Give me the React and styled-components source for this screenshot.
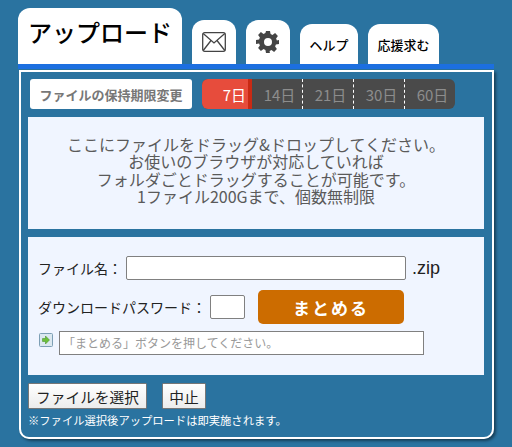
import React from "react";
import styled, { createGlobalStyle } from "styled-components";

const GlobalStyle = createGlobalStyle`
  html, body {
    margin: 0;
    padding: 0;
    background: #2a73a0;
  }
  body {
    font-family: "Noto Sans CJK JP", "Liberation Sans", sans-serif;
    color: #222;
  }
`;

const Page = styled.div`
  width: 512px;
  height: 447px;
  box-sizing: border-box;
  padding: 8px 0 0 18px;
  overflow: hidden;
`;

const Tabs = styled.div`
  display: flex;
  align-items: flex-end;
  gap: 10px;
  height: 56px;
`;

const Tab = styled.div`
  display: flex;
  align-items: center;
  justify-content: center;
  box-sizing: border-box;
  width: ${(p) => p.$w}px;
  height: ${(p) => p.$h}px;
  background: #fff;
  border-radius: 12px 12px 0 0;
  color: #000;
  font-size: ${(p) => p.$size || 13}px;
  font-weight: ${(p) => p.$weight || 500};
  padding-bottom: ${(p) => p.$pb || 0}px;
`;

const BlueLine = styled.div`
  width: 476px;
  height: 5px;
  background: #1c6fe0;
`;

const Panel = styled.div`
  box-sizing: border-box;
  width: 475px;
  height: 369px;
  margin: 1px 0 0 1px;
  border: 2px solid #fff;
  border-radius: 0 0 10px 10px;
  box-shadow: 2px 2px 3px rgba(0, 0, 0, 0.45);
  padding: 7px 8px 0 7px;
`;

const OptionBar = styled.div`
  display: flex;
  align-items: center;
  height: 30px;
  padding-left: 2px;
`;

const PeriodLabel = styled.div`
  width: 162px;
  height: 30px;
  display: flex;
  align-items: center;
  justify-content: center;
  background: #fff;
  border-radius: 3px;
  color: #777;
  font-size: 13px;
  font-weight: 700;
`;

const Periods = styled.div`
  display: flex;
  height: 30px;
  margin-left: 10px;
  border-radius: 6px;
  overflow: hidden;
  background: #4a4a4a;
`;

const Period = styled.div`
  box-sizing: border-box;
  width: ${(p) => p.$w}px;
  display: flex;
  align-items: center;
  justify-content: ${(p) => (p.$active ? "flex-end" : "center")};
  padding-left: ${(p) => (p.$active ? 0 : 5)}px;
  padding-right: ${(p) => (p.$active ? 2 : 0)}px;
  font-size: 15px;
  color: ${(p) => (p.$active ? "#fff" : "#8d8d8d")};
  background: ${(p) => (p.$active ? "#e74c3c" : "transparent")};
  border-right: ${(p) =>
    p.$active ? "4px solid #c92a14" : p.$last ? "none" : "1px dashed #fff"};
`;

const InfoBox = styled.div`
  box-sizing: border-box;
  height: 112px;
  margin-top: 8px;
  padding-top: 19px;
  background: #f0f5ff;
  color: #5a5a5a;
  font-size: 16px;
  line-height: 17.4px;
  text-align: center;
`;

const FormBox = styled.div`
  box-sizing: border-box;
  height: 138px;
  margin-top: 8px;
  padding: 19px 0 0 10px;
  background: #f0f5ff;
`;

const Row = styled.div`
  display: flex;
  align-items: center;
  height: ${(p) => p.$h}px;
  margin-top: ${(p) => p.$mt || 0}px;
`;

const Label = styled.span`
  font-size: 14px;
  color: #222;
  white-space: nowrap;
`;

const TextInput = styled.div`
  box-sizing: border-box;
  width: ${(p) => p.$w}px;
  height: 24px;
  margin-left: ${(p) => p.$ml}px;
  background: #fff;
  border: 1px solid #808080;
  border-radius: ${(p) => (p.$square ? 0 : 2)}px;
  color: #999;
  font-size: 12px;
  line-height: 22px;
  padding-left: 3px;
  white-space: nowrap;
`;

const Ext = styled.span`
  margin-left: 6px;
  font-size: 18px;
  color: #222;
  font-family: "Liberation Sans", sans-serif;
`;

const SubmitButton = styled.div`
  width: 146px;
  height: 34px;
  margin-left: 13px;
  display: flex;
  align-items: center;
  justify-content: center;
  background: #cc6c00;
  border-radius: 5px;
  color: #fff;
  font-size: 17px;
  font-weight: 700;
  letter-spacing: 2px;
`;

const StatusIcon = styled.span`
  display: flex;
  align-self: flex-start;
  margin: 2px 0 0 1px;
`;

const Actions = styled.div`
  display: flex;
  gap: 15px;
  margin-top: 8px;
`;

const Button = styled.div`
  box-sizing: border-box;
  width: ${(p) => p.$w}px;
  height: 26px;
  display: flex;
  align-items: center;
  justify-content: center;
  background: linear-gradient(#fff, #ececec);
  border: 1px solid #777;
  border-radius: 1px;
  color: #222;
  font-size: 14.7px;
`;

const Note = styled.div`
  margin-top: 3px;
  color: #fff;
  font-size: 11.3px;
  line-height: 16px;
  white-space: nowrap;
`;

const MailIcon = () => (
  <svg width="24" height="20" viewBox="0 0 24 20" fill="none" stroke="#444" strokeWidth="1.3">
    <rect x="0.7" y="0.7" width="22.6" height="18.6" rx="2" />
    <path d="M1.2 1.5 L12 11 L22.8 1.5 M1.2 18.5 L9 8.5 M22.8 18.5 L15 8.5" />
  </svg>
);

const GearIcon = () => (
  <svg width="24" height="24" viewBox="0 0 24 24">
    <path
      fill="#444"
      fillRule="evenodd"
      d="M10 1h4l.6 3.1 1.9.8 2.6-1.8 2.8 2.8-1.8 2.6.8 1.9L23 10v4l-3.1.6-.8 1.9 1.8 2.6-2.8 2.8-2.6-1.8-1.9.8L13.9 23H10l-.6-3.1-1.9-.8-2.6 1.8-2.8-2.8 1.8-2.6-.8-1.9L0 14v-4l3.1-.6.8-1.9L2.1 4.9l2.8-2.8 2.6 1.8 1.9-.8zM12 8a4 4 0 1 0 0 8 4 4 0 0 0 0-8z"
    />
  </svg>
);

const ArrowIcon = () => (
  <svg width="14" height="14" viewBox="0 0 14 14">
    <rect x="0.5" y="0.5" width="13" height="13" rx="1" fill="#dbe8f0" stroke="#7d9fb5" />
    <path d="M3.5 5.5h3V3l4 4-4 4V8.5h-3z" fill="#6cc03a" stroke="#3d8a1c" strokeWidth="0.5" />
  </svg>
);

const periods = [
  { label: "7日", w: 50, active: true },
  { label: "14日", w: 51 },
  { label: "21日", w: 51 },
  { label: "30日", w: 51 },
  { label: "60日", w: 50, last: true },
];

export default function App() {
  return (
    <>
      <GlobalStyle />
      <Page>
        <Tabs>
          <Tab $w={164} $h={56} $size={24} $pb={10}>アップロード</Tab>
          <Tab $w={44} $h={44}><MailIcon /></Tab>
          <Tab $w={44} $h={44} $pb={1}><GearIcon /></Tab>
          <Tab $w={58} $h={40}>ヘルプ</Tab>
          <Tab $w={71} $h={40}>応援求む</Tab>
        </Tabs>
        <BlueLine />
        <Panel>
          <OptionBar>
            <PeriodLabel>ファイルの保持期限変更</PeriodLabel>
            <Periods>
              {periods.map((p) => (
                <Period key={p.label} $w={p.w} $active={p.active} $last={p.last}>
                  {p.label}
                </Period>
              ))}
            </Periods>
          </OptionBar>
          <InfoBox>
            ここにファイルをドラッグ&amp;ドロップしてください。<br />
            お使いのブラウザが対応していれば<br />
            フォルダごとドラッグすることが可能です。<br />
            1ファイル200Gまで、個数無制限
          </InfoBox>
          <FormBox>
            <Row $h={24}>
              <Label>ファイル名：</Label>
              <TextInput $w={280} $ml={4} />
              <Ext>.zip</Ext>
            </Row>
            <Row $h={34} $mt={10}>
              <Label>ダウンロードパスワード：</Label>
              <TextInput $w={35} $ml={4} />
              <SubmitButton>まとめる</SubmitButton>
            </Row>
            <Row $h={24} $mt={7}>
              <StatusIcon><ArrowIcon /></StatusIcon>
              <TextInput $w={365} $ml={6} $square>「まとめる」ボタンを押してください。</TextInput>
            </Row>
          </FormBox>
          <Actions>
            <Button $w={119}>ファイルを選択</Button>
            <Button $w={44}>中止</Button>
          </Actions>
          <Note>※ファイル選択後アップロードは即実施されます。</Note>
        </Panel>
      </Page>
    </>
  );
}
